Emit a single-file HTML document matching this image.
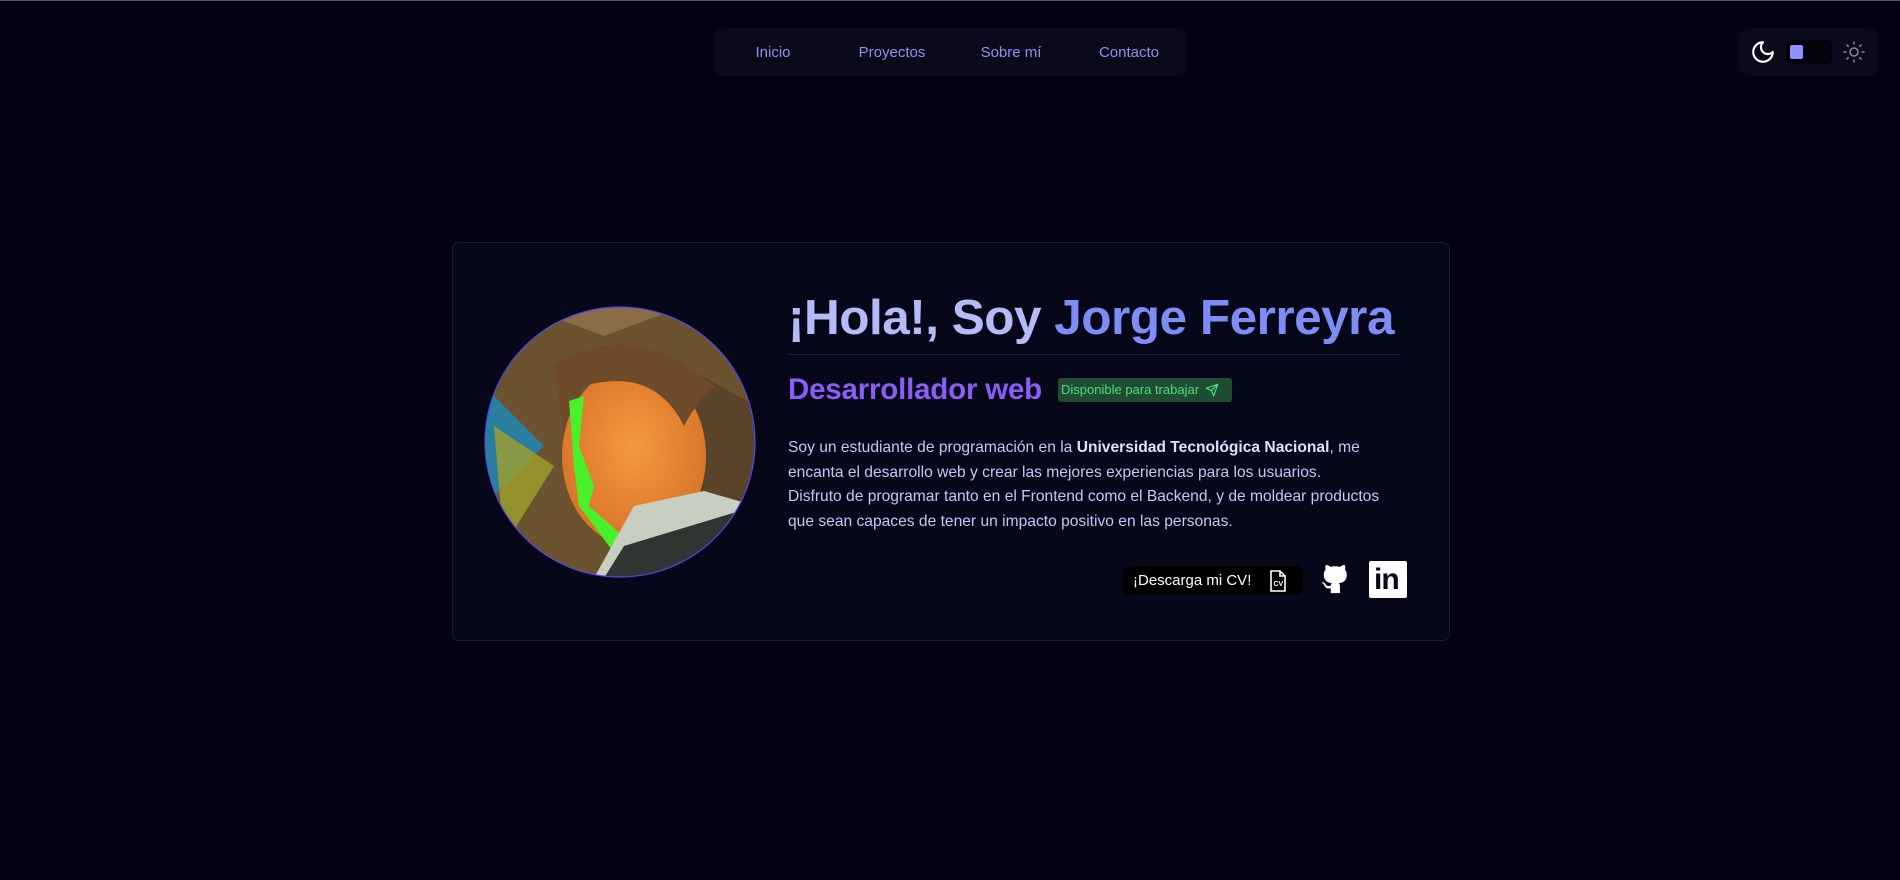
<!DOCTYPE html>
<html><head><meta charset="utf-8"><style>
*{margin:0;padding:0;box-sizing:border-box}
body{width:1900px;height:880px;background:#020212;font-family:"Liberation Sans",sans-serif;position:relative;overflow:hidden;border-top:1px solid #555}
.a{position:absolute}
.nav{left:714px;top:27px;width:473px;height:48px;background:#0a0a1a;border-radius:10px}
.nav span{position:absolute;top:16px;color:#8f8ff5;font-size:15px;transform:translateX(-50%);white-space:nowrap}
.tog{left:1739px;top:27px;width:139px;height:48px;background:#0a0a1a;border-radius:10px}
.card{left:452px;top:241px;width:998px;height:399px;background:#07071a;border:1px solid #1a1a35;border-radius:7px}
h1{position:absolute;left:788px;top:288px;font-size:49.5px;font-weight:bold;color:#b4bcf8;white-space:nowrap;letter-spacing:-0.5px}
h1 b{color:#7e8cf5}
.line{left:788px;top:353px;width:613px;height:1px;background:#1c1c3e}
h2{position:absolute;left:788px;top:372px;font-size:29.5px;font-weight:bold;color:#8b5cf6;white-space:nowrap;letter-spacing:-0.2px}
.badge{left:1058px;top:377px;width:174px;height:24px;background:#1e4d33;border-radius:3px;color:#4ade80;font-size:13px;line-height:24px;padding-left:3px;white-space:nowrap}
p{position:absolute;left:788px;top:435px;width:612px;font-size:15.6px;line-height:24.5px;color:#c5c8f3}
p b{color:#dfe1ff}
.cv{left:1123px;top:565px;width:180px;height:29px;background:#000;border-radius:7px;color:#fff;font-size:15px;line-height:29px;padding-left:10px}
</style></head><body>
<div class="a nav"><span style="left:59px">Inicio</span><span style="left:178px">Proyectos</span><span style="left:297px">Sobre mí</span><span style="left:415px">Contacto</span></div>
<div class="a tog">
<svg class="a" style="left:11px;top:11px" width="26" height="26" viewBox="0 0 24 24" fill="none" stroke="#fff" stroke-width="2" stroke-linecap="round" stroke-linejoin="round"><path d="M12 3a6 6 0 0 0 9 9 9 9 0 1 1-9-9z"/></svg>
<div class="a" style="left:47px;top:12px;width:46px;height:24px;background:#03030d;border-radius:5px"></div>
<div class="a" style="left:51px;top:17px;width:13px;height:14px;background:#9090ff;border-radius:2px"></div>
<svg class="a" style="left:103px;top:12px" width="24" height="24" viewBox="0 0 24 24" fill="none" stroke="#888" stroke-width="1.5" stroke-linecap="round"><circle cx="12" cy="12" r="4"/><path d="M12 2v2M12 20v2M4.9 4.9l1.4 1.4M17.7 17.7l1.4 1.4M2 12h2M20 12h2M6.3 17.7l-1.4 1.4M19.1 4.9l-1.4 1.4"/></svg>
</div>
<div class="a card"></div>
<svg class="a" style="left:484px;top:305px" width="272" height="272" viewBox="0 0 272 272">
<defs><clipPath id="c"><circle cx="136" cy="136" r="135"/></clipPath>
<radialGradient id="f" cx="0.5" cy="0.45" r="0.55"><stop offset="0" stop-color="#f59a3c"/><stop offset="1" stop-color="#d8732a"/></radialGradient></defs>
<g clip-path="url(#c)">
<rect width="272" height="272" fill="#6b5330"/>
<path d="M0 80 L60 140 L0 200Z" fill="#2a7fa0"/>
<path d="M10 120 L70 160 L20 240Z" fill="#9fa02a" opacity=".8"/>
<path d="M40 0 L120 30 L200 0Z" fill="#8a6d45"/>
<path d="M200 60 L272 100 L272 200 L210 190Z" fill="#5a4328"/>
<ellipse cx="150" cy="150" rx="72" ry="90" fill="url(#f)"/>
<path d="M70 60 Q150 10 230 80 Q210 100 200 120 Q170 60 100 80 Q85 100 80 130Z" fill="#6d4a2a"/>
<path d="M85 95 L100 90 L95 140 L110 180 L105 200 L150 240 L140 260 L95 200 L90 160Z" fill="#4af02a"/>
<path d="M150 200 L220 185 L272 200 L272 272 L110 272Z" fill="#c9cfc0"/>
<path d="M140 240 L272 200 L272 272 L120 272Z" fill="#2f3530"/>
</g>
<circle cx="136" cy="136" r="135" fill="none" stroke="#4f46e5" stroke-width="1.2"/>
</svg>
<h1>¡Hola!, Soy <b>Jorge Ferreyra</b></h1>
<div class="a line"></div>
<h2>Desarrollador web</h2>
<div class="a badge">Disponible para trabajar
<svg style="vertical-align:-3px;margin-left:2px" width="14" height="14" viewBox="0 0 24 24" fill="none" stroke="#4ade80" stroke-width="2" stroke-linejoin="round"><path d="M22 2 11 13M22 2l-7 20-4-9-9-4z"/></svg></div>
<p>Soy un estudiante de programación en la <b>Universidad Tecnológica Nacional</b>, me encanta el desarrollo web y crear las mejores experiencias para los usuarios.<br>Disfruto de programar tanto en el Frontend como el Backend, y de moldear productos que sean capaces de tener un impacto positivo en las personas.</p>
<div class="a cv">¡Descarga mi CV!
<svg class="a" style="left:145px;top:4px" width="20" height="22" viewBox="0 0 20 22" fill="none" stroke="#fff" stroke-width="1.6"><path d="M3 1h9l5 5v15H3z"/><path d="M12 1v5h5"/><text x="5.5" y="16" fill="#fff" stroke="none" font-size="7" font-weight="bold" font-family="Liberation Sans">CV</text></svg></div>
<svg class="a" style="left:1318px;top:561px" width="34" height="34" viewBox="0 0 24 24" fill="#fff"><path d="M9 22v-3.5c-3.5.7-4.3-1.6-4.3-1.6-.6-1.4-1.4-1.8-1.4-1.8-1.1-.8.1-.8.1-.8 1.3.1 1.9 1.3 1.9 1.3 1.1 1.9 3 1.4 3.7 1 .1-.8.4-1.4.8-1.7-2.8-.3-5.7-1.4-5.7-6.1 0-1.4.5-2.5 1.3-3.4-.1-.3-.6-1.600.1-3.3 0 0 1.1-.3 3.5 1.3a12 12 0 0 1 6.3 0C17.8 1.8 18.9 2.1 18.9 2.1c.7 1.7.2 3 .1 3.3.8.9 1.3 2 1.3 3.4 0 4.8-2.9 5.8-5.7 6.1.5.4.9 1.1.9 2.3V22z"/></svg>
<div class="a" style="left:1369px;top:560px;width:38px;height:37px;background:#fff;border-radius:2px"></div>
<div class="a" style="left:1374px;top:560px;font-size:30px;font-weight:bold;color:#07071a;letter-spacing:-1px;line-height:37px">in</div>
</body></html>
